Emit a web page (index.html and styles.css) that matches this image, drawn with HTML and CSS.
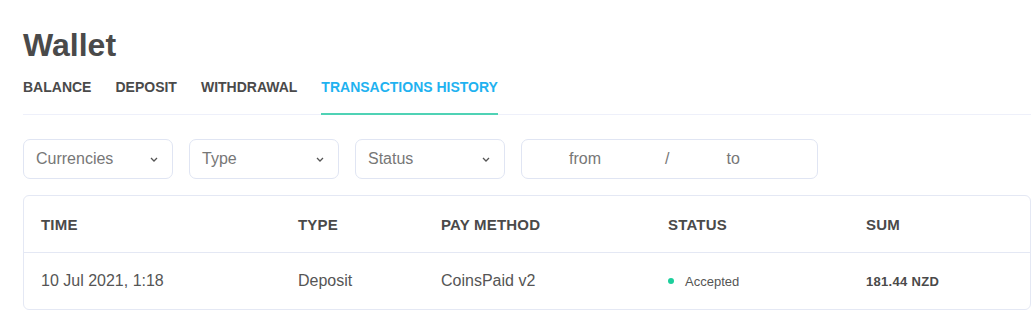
FILE: index.html
```html
<!DOCTYPE html>
<html lang="en">
<head>
    <meta charset="UTF-8">
    <meta name="viewport" content="width=device-width, initial-scale=1.0">
    <title>Wallet</title>
    <link rel="stylesheet" href="styles.css">
</head>
<body>

<div class="wallet">
    <h1>Wallet</h1>

    <!-- Wallet sections -->
    <nav class="tabs">
        <a href="#" class="tab">Balance</a>
        <a href="#" class="tab">Deposit</a>
        <a href="#" class="tab">Withdrawal</a>
        <a href="#" class="tab active">Transactions history</a>
    </nav>

    <!-- Filters -->
    <div class="filters">
        <div class="filter-select">
            <span>Currencies</span>
            <svg class="chevron" width="8" height="5" viewBox="0 0 8 5"><path d="M1 1l3 3 3-3" fill="none" stroke="#555" stroke-width="1.3"/></svg>
        </div>
        <div class="filter-select">
            <span>Type</span>
            <svg class="chevron" width="8" height="5" viewBox="0 0 8 5"><path d="M1 1l3 3 3-3" fill="none" stroke="#555" stroke-width="1.3"/></svg>
        </div>
        <div class="filter-select">
            <span>Status</span>
            <svg class="chevron" width="8" height="5" viewBox="0 0 8 5"><path d="M1 1l3 3 3-3" fill="none" stroke="#555" stroke-width="1.3"/></svg>
        </div>
        <div class="filter-date">
            <span class="date-from">from</span>
            <span class="date-sep">/</span>
            <span class="date-to">to</span>
        </div>
    </div>

    <!-- Transactions table -->
    <div class="history">
        <div class="history-row history-head">
            <div>Time</div>
            <div>Type</div>
            <div>Pay method</div>
            <div>Status</div>
            <div>Sum</div>
        </div>
        <div class="history-row">
            <div>10 Jul 2021, 1:18</div>
            <div>Deposit</div>
            <div>CoinsPaid v2</div>
            <div class="status"><span class="dot"></span>Accepted</div>
            <div class="sum">181.44 NZD</div>
        </div>
    </div>
</div>

</body>
</html>
```

FILE: styles.css
```css
body {
    font-family: "Liberation Sans", Arial, sans-serif;
    margin: 0;
    background-color: #fff;
    color: #555;
}
.wallet {
    width: 1008px;
    margin-left: 23px;
}
h1 {
    margin: 29px 0 18px;
    font-size: 32px;
    line-height: 32px;
    font-weight: bold;
    color: #4a4a4a;
}
.tabs {
    display: flex;
    gap: 24px;
    border-bottom: 1px solid #eef0fa;
}
.tab {
    display: block;
    padding-bottom: 18px;
    margin-bottom: -1px;
    border-bottom: 2px solid transparent;
    font-size: 14px;
    line-height: 16px;
    font-weight: bold;
    text-transform: uppercase;
    text-decoration: none;
    color: #4a4a4a;
}
.tab.active {
    color: #1fb2f0;
    border-bottom-color: #4fd2b5;
}
.filters {
    display: flex;
    gap: 16px;
    margin-top: 24px;
}
.filter-select,
.filter-date {
    display: flex;
    align-items: center;
    height: 40px;
    box-sizing: border-box;
    border: 1px solid #e0e5f3;
    border-radius: 7px;
    font-size: 16px;
    color: #777;
}
.filter-select {
    width: 150px;
    justify-content: space-between;
    padding: 0 14px 0 12px;
}
.filter-date {
    width: 297px;
}
.date-from {
    margin-left: 47px;
    width: 96px;
}
.date-to {
    margin-left: 57px;
}
.history {
    margin-top: 16px;
    border: 1px solid #e4e8f4;
    border-radius: 6px;
}
.history-row {
    display: grid;
    grid-template-columns: 257px 143px 227px 198px 1fr;
    align-items: center;
    height: 56px;
    font-size: 16px;
    color: #555;
}
.history-row > div {
    padding-left: 17px;
}
.history-head {
    border-bottom: 1px solid #e4e8f4;
    font-size: 15px;
    font-weight: bold;
    text-transform: uppercase;
    letter-spacing: 0.2px;
    color: #4a4a4a;
}
.status {
    display: flex;
    align-items: center;
    font-size: 13px;
}
.dot {
    width: 6px;
    height: 6px;
    border-radius: 50%;
    background-color: #1ccf9c;
    margin-right: 11px;
}
.sum {
    font-size: 13px;
    font-weight: bold;
    letter-spacing: 0.3px;
    color: #4a4a4a;
}
```
